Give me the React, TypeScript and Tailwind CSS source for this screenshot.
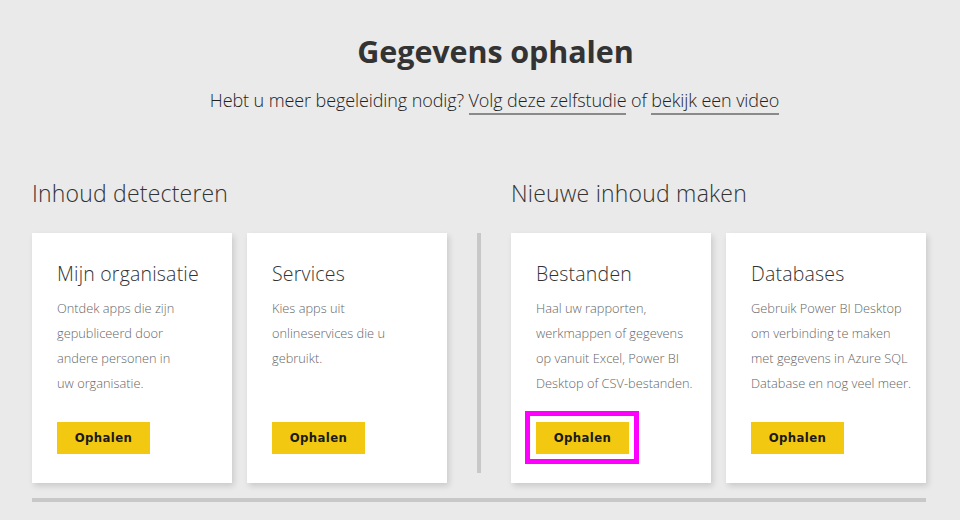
import React from "react";

type CardProps = {
  title: string;
  lines: string[];
  highlight?: boolean;
};

function Card({ title, lines, highlight }: CardProps) {
  return (
    <div className="w-[200px] h-[250px] bg-white shadow-[2px_3px_6px_rgba(0,0,0,0.14)] pl-[25px] pr-[10px] pt-[28px] flex flex-col">
      <div className="text-[19.5px] leading-[26px] text-[#333] font-light tracking-[0.2px]">{title}</div>
      <div className="mt-[9px] text-[12.8px] leading-[25px] text-[#666] font-light">
        {lines.map((l, i) => (
          <div key={i} className="whitespace-nowrap">{l}</div>
        ))}
      </div>
      <div className="mt-auto mb-[29px]">
        <div className={highlight ? "relative inline-block" : "inline-block"}>
          {highlight && (
            <div className="absolute left-[-11px] top-[-11px] w-[114px] h-[53px] border-[5px] border-[#ff00ff]" />
          )}
          <button className="w-[93px] h-[32px] bg-[#f2c811] text-[13px] font-bold text-[#1a1a1a] tracking-[0.4px] [font-stretch:condensed] [font-family:'DejaVu_Sans_Condensed','DejaVu_Sans',sans-serif]">
            Ophalen
          </button>
        </div>
      </div>
    </div>
  );
}

export default function App() {
  return (
    <div className="w-[960px] h-[520px] overflow-hidden bg-[#eaeaea] [font-family:'Open_Sans','Noto_Sans',sans-serif] text-[#333]">
      <div className="pt-[31px] text-center">
        <h1 className="pl-[31px] text-[30.5px] leading-[40px] font-bold text-[#333] tracking-[-0.1px]">Gegevens ophalen</h1>
        <p className="pl-[29px] mt-[17px] text-[18px] leading-[24px] font-light text-[#222] tracking-[-0.1px]">
          Hebt u meer begeleiding nodig?{" "}
          <span className="border-b-2 border-[#8a8a8a] pb-[1px]">Volg deze zelfstudie</span> of{" "}
          <span className="border-b-2 border-[#8a8a8a] pb-[1px]">bekijk een video</span>
        </p>
      </div>

      <div className="mt-[65px] px-[32px] flex">
        <div className="w-[415px]">
          <h2 className="text-[23px] leading-[32px] font-light text-[#333] tracking-[0.2px]">Inhoud detecteren</h2>
          <div className="mt-[24px] flex gap-[15px]">
            <Card
              title="Mijn organisatie"
              lines={["Ontdek apps die zijn", "gepubliceerd door", "andere personen in", "uw organisatie."]}
            />
            <Card title="Services" lines={["Kies apps uit", "onlineservices die u", "gebruikt."]} />
          </div>
        </div>
        <div className="w-[4px] h-[240px] bg-[#c8c8c8] mt-[56px] mx-[30px]" />
        <div className="w-[415px]">
          <h2 className="text-[23px] leading-[32px] font-light text-[#333] tracking-[0.2px]">Nieuwe inhoud maken</h2>
          <div className="mt-[24px] flex gap-[15px]">
            <Card
              title="Bestanden"
              lines={["Haal uw rapporten,", "werkmappen of gegevens", "op vanuit Excel, Power BI", "Desktop of CSV-bestanden."]}
              highlight
            />
            <Card
              title="Databases"
              lines={["Gebruik Power BI Desktop", "om verbinding te maken", "met gegevens in Azure SQL", "Database en nog veel meer."]}
            />
          </div>
        </div>
      </div>
      <div className="mx-[32px] w-[894px] mt-[15px] h-[4px] bg-[#c8c8c8]" />
    </div>
  );
}
